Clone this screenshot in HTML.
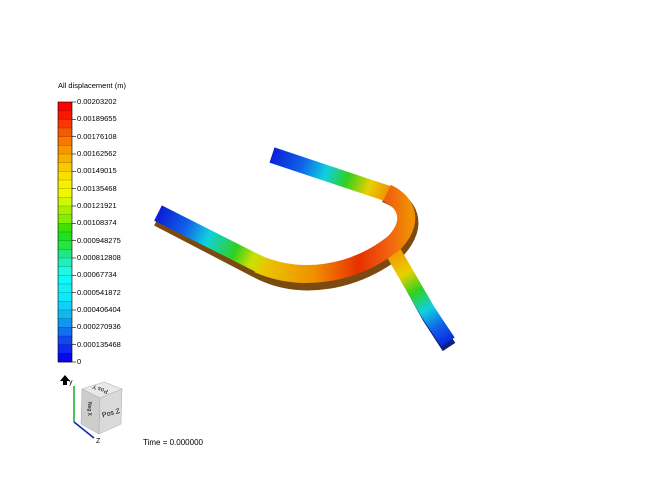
<!DOCTYPE html>
<html><head><meta charset="utf-8"><style>
body{margin:0;width:666px;height:500px;background:#fff;position:relative;overflow:hidden;font-family:"Liberation Sans",sans-serif}
.t{position:absolute;font-size:7.5px;color:#000;white-space:nowrap}
</style></head><body>
<div class="t" style="left:58px;top:81px">All displacement (m)</div>
<svg width="666" height="500" style="position:absolute;left:0;top:0">
<defs>
<linearGradient id="la" gradientUnits="userSpaceOnUse" x1="158" y1="214" x2="268" y2="268">
<stop offset="0" stop-color="#0a1ed8"/><stop offset="0.25" stop-color="#1060e8"/><stop offset="0.45" stop-color="#10d0e0"/><stop offset="0.7" stop-color="#30d020"/><stop offset="0.85" stop-color="#c8e000"/><stop offset="1" stop-color="#e8c800"/></linearGradient>
<linearGradient id="bd" gradientUnits="userSpaceOnUse" x1="262" y1="0" x2="410" y2="0">
<stop offset="0" stop-color="#e8c800"/><stop offset="0.35" stop-color="#f09000"/><stop offset="0.65" stop-color="#e83000"/><stop offset="0.85" stop-color="#f06010"/><stop offset="1" stop-color="#f09000"/></linearGradient>
<linearGradient id="ra" gradientUnits="userSpaceOnUse" x1="392" y1="200" x2="270" y2="156">
<stop offset="0" stop-color="#f08000"/><stop offset="0.2" stop-color="#e8d000"/><stop offset="0.38" stop-color="#30d020"/><stop offset="0.55" stop-color="#10d0e0"/><stop offset="0.75" stop-color="#1060e8"/><stop offset="1" stop-color="#0a1ed8"/></linearGradient>
<linearGradient id="st" gradientUnits="userSpaceOnUse" x1="395" y1="255" x2="450" y2="345">
<stop offset="0" stop-color="#f0a000"/><stop offset="0.2" stop-color="#e8d000"/><stop offset="0.4" stop-color="#30d020"/><stop offset="0.6" stop-color="#10d0e0"/><stop offset="0.8" stop-color="#1060e8"/><stop offset="1" stop-color="#0a1ed8"/></linearGradient>
</defs>
<g fill="none" stroke-linejoin="round">
<path d="M158 218 L262 272 C300 290 352 284 397 250 C420 225 410 203 385 194" stroke="#7a4a10" stroke-width="17"/>
<path d="M396 256 L429 316 L449 347" stroke="#102080" stroke-width="15"/>
<path d="M392 250 L428 312 L448 342" stroke="url(#st)" stroke-width="16"/>
<path d="M395 196 L272 155" stroke="url(#ra)" stroke-width="16"/>
<path d="M258 264 C300 282 352 276 394 243 C414 222 408 203 387 193" stroke="url(#bd)" stroke-width="18"/>
<path d="M158 213 L263 266" stroke="url(#la)" stroke-width="17"/>
</g>
</svg>
<svg width="120" height="290" style="position:absolute;left:50px;top:95px" id="cb"></svg>
<div id="labels"></div>
<svg width="70" height="80" style="position:absolute;left:56px;top:372px">
<path d="M4 9 L9 3 L14 9 L11 9 L11 13 L7 13 L7 9Z" fill="#000"/>
<text x="13" y="12" font-size="7" font-family="Liberation Sans">y</text>
<polygon points="26,17 48,10 66,17 44,26" fill="#e8e8e8" stroke="#aaa" stroke-width=".5"/>
<polygon points="26,17 44,26 43,62 25,52" fill="#cdcdcd" stroke="#aaa" stroke-width=".5"/>
<polygon points="44,26 66,17 65,52 43,62" fill="#dadada" stroke="#aaa" stroke-width=".5"/>
<text x="40" y="20" font-size="6" transform="rotate(200 46 18)" font-family="Liberation Sans">Pos Y</text>
<text x="46" y="44" font-size="7" transform="rotate(-15 52 42)" font-family="Liberation Sans">Pos Z</text>
<text x="30" y="32" font-size="5" transform="rotate(90 32 32)" font-family="Liberation Sans">Neg X</text>
<line x1="18" y1="14" x2="18" y2="50" stroke="#10b020" stroke-width="1.5"/>
<line x1="18" y1="50" x2="38" y2="66" stroke="#1020c0" stroke-width="1.5"/>
<text x="40" y="71" font-size="7" font-family="Liberation Sans">Z</text>
</svg>
<div class="t" style="left:143px;top:438px;font-size:8px">Time = 0.000000</div>
<script>
var cols=["#ff0000","#f81800","#f83800","#f85800","#f87800","#f89800","#f8b000","#f8c800","#f8e000","#f8f000","#f0f800","#d0f800","#a8f000","#80f000","#40e000","#20e020","#20e840","#20e880","#20f0c0","#20f8e0","#10f8f8","#10f0f8","#10e8f8","#10d0f8","#10b8f0","#1098f0","#1070f0","#1048f0","#1028f0","#0808f0"];
var s="",h=260/30;
for(var i=0;i<30;i++){s+='<rect x="8" y="'+(7+i*h)+'" width="14" height="'+(h+0.3)+'" fill="'+cols[i]+'"/>';if(i>0)s+='<line x1="8" x2="22" y1="'+(7+i*h)+'" y2="'+(7+i*h)+'" stroke="#000" stroke-opacity=".35" stroke-width=".5"/>'}
s+='<rect x="8" y="7" width="14" height="260" fill="none" stroke="#000" stroke-width=".6"/>';
var L=["0.00203202","0.00189655","0.00176108","0.00162562","0.00149015","0.00135468","0.00121921","0.00108374","0.000948275","0.000812808","0.00067734","0.000541872","0.000406404","0.000270936","0.000135468","0"],d="";
for(var j=0;j<16;j++){var y=7+j*260/15;s+='<line x1="22" x2="26" y1="'+y+'" y2="'+y+'" stroke="#000" stroke-width=".6"/>';d+='<div class="t" style="left:77px;top:'+(95+y-5)+'px">'+L[j]+'</div>'}
document.getElementById("cb").innerHTML=s;document.getElementById("labels").innerHTML=d;
</script>
</body></html>
